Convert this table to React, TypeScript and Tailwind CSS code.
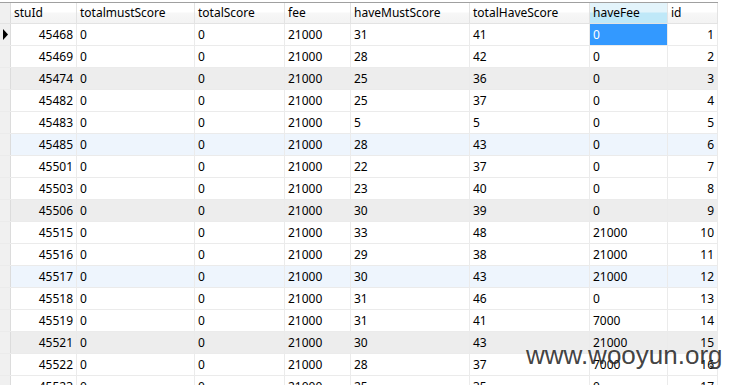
import React from "react";

type Row = {
  cells: string[];
  tone?: "gray" | "blue";
};

const columns = [
  { name: "stuId", w: "w-[66px]", right: true },
  { name: "totalmustScore", w: "w-[118px]" },
  { name: "totalScore", w: "w-[90px]" },
  { name: "fee", w: "w-[66px]" },
  { name: "haveMustScore", w: "w-[119px]" },
  { name: "totalHaveScore", w: "w-[120px]" },
  { name: "haveFee", w: "w-[78px]" },
  { name: "id", w: "w-[50px]", right: true },
];

const rows: Row[] = [
  { cells: ["45468", "0", "0", "21000", "31", "41", "0", "1"] },
  { cells: ["45469", "0", "0", "21000", "28", "42", "0", "2"] },
  { cells: ["45474", "0", "0", "21000", "25", "36", "0", "3"], tone: "gray" },
  { cells: ["45482", "0", "0", "21000", "25", "37", "0", "4"] },
  { cells: ["45483", "0", "0", "21000", "5", "5", "0", "5"] },
  { cells: ["45485", "0", "0", "21000", "28", "43", "0", "6"], tone: "blue" },
  { cells: ["45501", "0", "0", "21000", "22", "37", "0", "7"] },
  { cells: ["45503", "0", "0", "21000", "23", "40", "0", "8"] },
  { cells: ["45506", "0", "0", "21000", "30", "39", "0", "9"], tone: "gray" },
  { cells: ["45515", "0", "0", "21000", "33", "48", "21000", "10"] },
  { cells: ["45516", "0", "0", "21000", "29", "38", "21000", "11"] },
  { cells: ["45517", "0", "0", "21000", "30", "43", "21000", "12"], tone: "blue" },
  { cells: ["45518", "0", "0", "21000", "31", "46", "0", "13"] },
  { cells: ["45519", "0", "0", "21000", "31", "41", "7000", "14"] },
  { cells: ["45521", "0", "0", "21000", "30", "43", "21000", "15"], tone: "gray" },
  { cells: ["45522", "0", "0", "21000", "28", "37", "7000", "16"] },
  { cells: ["45523", "0", "0", "21000", "25", "35", "0", "17"] },
];

export default function App() {
  return (
    <div className="relative h-[385px] w-[731px] overflow-hidden bg-white font-['Noto_Sans',sans-serif] text-[12px] text-black">
      <div className="h-[2px] bg-white" />
      <div className="h-px w-[718px] bg-[#a0a0a0]" />

      {/* header */}
      <div className="flex h-[21px] w-[718px] border-b border-[#e3e3e3]">
        <div className="w-[11px] shrink-0 border-r border-[#dcdcdc] bg-[#f0f0f0]" />
        {columns.map((c) => (
          <div
            key={c.name}
            className={`${c.w} flex shrink-0 items-center border-r border-[#e3e3e3] px-[3px] ${
              c.name === "haveFee"
                ? "bg-[linear-gradient(180deg,#e3f4fb_0%,#e3f4fb_45%,#bfe8f8_50%,#bfe8f8_100%)]"
                : "bg-[linear-gradient(180deg,#ffffff_0%,#ffffff_45%,#f7f7f7_50%,#f3f3f3_100%)]"
            }`}
          >
            {c.name}
          </div>
        ))}
      </div>

      {/* body */}
      {rows.map((r, i) => (
        <div
          key={i}
          className={`flex h-[22px] w-[718px] border-b border-[#ebebeb] ${
            r.tone === "gray" ? "bg-[#ededed]" : r.tone === "blue" ? "bg-[#eef5fd]" : "bg-white"
          }`}
        >
          <div className="relative flex w-[11px] shrink-0 items-center border-r border-[#dcdcdc] bg-[#f0f0f0]">
            {i === 0 && (
              <svg width="6" height="11" viewBox="0 0 6 11" className="ml-[3px]">
                <path d="M0 0 L5 5.5 L0 11 Z" fill="#000" />
              </svg>
            )}
          </div>
          {columns.map((c, j) => {
            const selected = i === 0 && c.name === "haveFee";
            return (
              <div
                key={c.name}
                className={`${c.w} flex shrink-0 items-center border-r border-[#ebebeb] px-[3px] ${
                  c.right ? "justify-end" : ""
                } ${selected ? "bg-[#3399ff] text-white" : ""}`}
              >
                {r.cells[j]}
              </div>
            );
          })}
        </div>
      ))}

      {/* watermark */}
      <div className="pointer-events-none absolute left-[526px] top-[342px] font-['Liberation_Sans',sans-serif] text-[26px] leading-none text-[#2b2b2b]/90">
        www.wooyun.org
      </div>
    </div>
  );
}
